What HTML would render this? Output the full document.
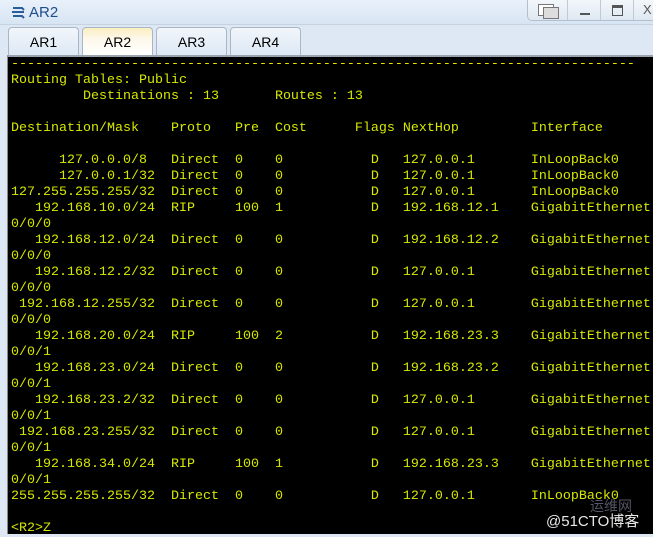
<!DOCTYPE html><html><head><meta charset="utf-8"><style>
body{margin:0;width:653px;height:537px;overflow:hidden;background:#dde8f4;font-family:"Liberation Sans",sans-serif;position:relative}
.title{position:absolute;left:0;top:0;width:653px;height:25px;background:linear-gradient(#e9f1fa,#d6e4f3)}
.ttl{position:absolute;left:29px;top:4px;font-size:15px;color:#1f4e8c}
.tab{position:absolute;top:27px;height:28px;width:71px;border:1px solid #a9b6c6;border-bottom:none;border-radius:4px 4px 0 0;background:linear-gradient(#f2f6fb,#dde8f4);font-size:14px;text-align:center;line-height:28px;box-sizing:border-box;color:#000}
.act{background:linear-gradient(#fbeec0,#fdf8ea 40%,#fff);}
.term{position:absolute;left:7px;top:55px;width:646px;height:479px;background:#000;border-left:1px solid #888;border-top:2px solid #9aa3ad;box-sizing:border-box}
pre{margin:0;position:absolute;left:3px;top:0;font-family:"Liberation Mono",monospace;font-size:13.33px;line-height:16px;color:#d6e800;white-space:pre}
.btn{position:absolute;top:0;height:20px;border-left:1px solid #c0cad6}
</style></head><body>
<div class="title">
<svg style="position:absolute;left:10px;top:4px" width="18" height="18"><path d="M3 4h9l2 2M2 8h12M3 12h9l2 2" stroke="#2a5d9c" stroke-width="2" fill="none"/></svg>
<div class="ttl">AR2</div>
<div style="position:absolute;left:527px;top:0;width:126px;height:20px;border:1px solid #b3bfcc;border-top:none;border-radius:0 0 0 5px;background:linear-gradient(#f3f7fb,#dfe8f2)"></div>
<div style="position:absolute;left:538px;top:4px;width:14px;height:10px;border:1px solid #777;background:#fff"></div>
<div style="position:absolute;left:543px;top:7px;width:14px;height:10px;border:1px solid #777;background:#ddd"></div>
<div class="btn" style="left:567px"></div><div style="position:absolute;left:580px;top:13px;width:10px;height:2px;background:#555"></div>
<div class="btn" style="left:600px"></div><div style="position:absolute;left:612px;top:5px;width:9px;height:7px;border:1px solid #555;border-top-width:3px"></div>
<div class="btn" style="left:633px"></div><div style="position:absolute;left:643px;top:2px;font-size:13px;color:#555">X</div>
</div>
<div style="position:absolute;left:0;top:24px;width:653px;height:1px;background:#c5d2e0"></div>
<div class="tab" style="left:8px">AR1</div>
<div class="tab act" style="left:82px">AR2</div>
<div class="tab" style="left:156px">AR3</div>
<div class="tab" style="left:230px">AR4</div>
<div class="term"><pre><span style="color:#e8e800">------------------------------------------------------------------------------</span>
Routing Tables: Public
         Destinations : 13       Routes : 13

Destination/Mask    Proto   Pre  Cost      Flags NextHop         Interface

      127.0.0.0/8   Direct  0    0           D   127.0.0.1       InLoopBack0
      127.0.0.1/32  Direct  0    0           D   127.0.0.1       InLoopBack0
127.255.255.255/32  Direct  0    0           D   127.0.0.1       InLoopBack0
   192.168.10.0/24  RIP     100  1           D   192.168.12.1    GigabitEthernet
0/0/0
   192.168.12.0/24  Direct  0    0           D   192.168.12.2    GigabitEthernet
0/0/0
   192.168.12.2/32  Direct  0    0           D   127.0.0.1       GigabitEthernet
0/0/0
 192.168.12.255/32  Direct  0    0           D   127.0.0.1       GigabitEthernet
0/0/0
   192.168.20.0/24  RIP     100  2           D   192.168.23.3    GigabitEthernet
0/0/1
   192.168.23.0/24  Direct  0    0           D   192.168.23.2    GigabitEthernet
0/0/1
   192.168.23.2/32  Direct  0    0           D   127.0.0.1       GigabitEthernet
0/0/1
 192.168.23.255/32  Direct  0    0           D   127.0.0.1       GigabitEthernet
0/0/1
   192.168.34.0/24  RIP     100  1           D   192.168.23.3    GigabitEthernet
0/0/1
255.255.255.255/32  Direct  0    0           D   127.0.0.1       InLoopBack0

&lt;R2&gt;Z</pre></div>
<div style="position:absolute;left:590px;top:496px;font-size:14px;color:#556;font-family:'Noto Sans CJK SC',sans-serif">运维网</div>
<div style="position:absolute;left:546px;top:510px;font-size:15px;color:#e8e8e8;font-family:'Liberation Sans','Noto Sans CJK SC',sans-serif">@51CTO博客</div>
</body></html>
